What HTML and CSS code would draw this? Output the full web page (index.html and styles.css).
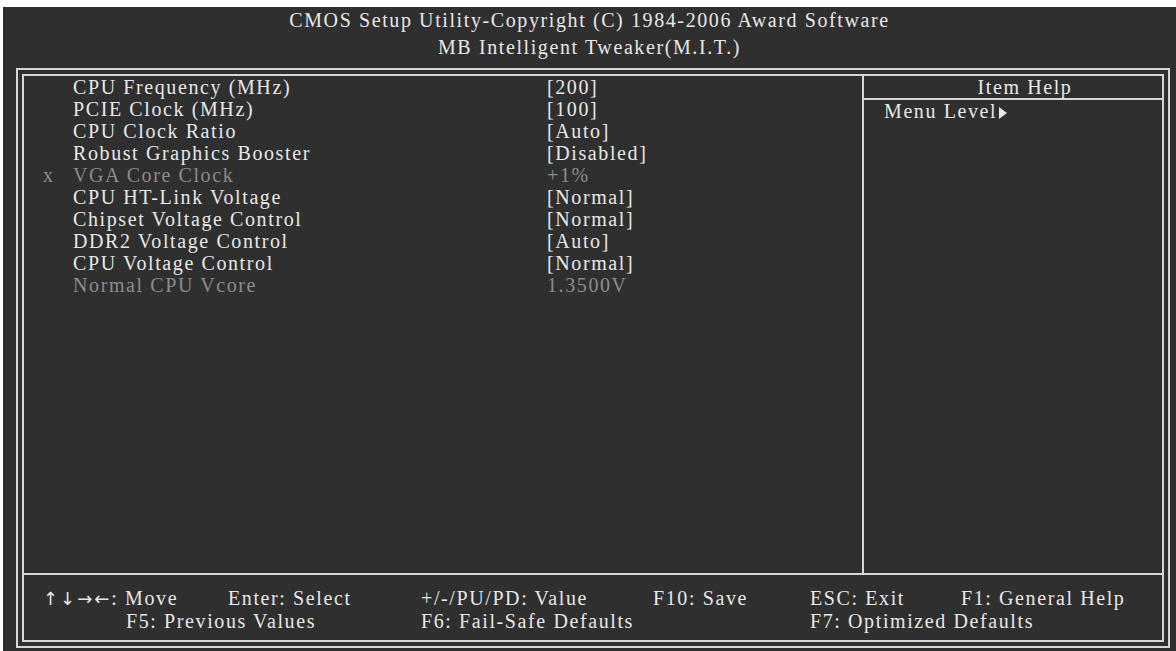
FILE: index.html
```html
<!DOCTYPE html>
<html lang="en">
<head>
  <meta charset="UTF-8">
  <title>CMOS Setup Utility - MB Intelligent Tweaker(M.I.T.)</title>
  <link rel="stylesheet" href="styles.css">
</head>
<body>
  <div class="screen">
    <header class="title">
      <div>CMOS Setup Utility-Copyright (C) 1984-2006 Award Software</div>
      <div>MB Intelligent Tweaker(M.I.T.)</div>
    </header>
    <div class="frame">
      <div class="frame-inner">
        <div class="main">
          <div class="items">
            <div class="row"><span class="mark"></span><span>CPU Frequency (MHz)</span><span>[200]</span></div>
            <div class="row"><span class="mark"></span><span>PCIE Clock (MHz)</span><span>[100]</span></div>
            <div class="row"><span class="mark"></span><span>CPU Clock Ratio</span><span>[Auto]</span></div>
            <div class="row"><span class="mark"></span><span>Robust Graphics Booster</span><span>[Disabled]</span></div>
            <div class="row off"><span class="mark">x</span><span>VGA Core Clock</span><span>+1%</span></div>
            <div class="row"><span class="mark"></span><span>CPU HT-Link Voltage</span><span>[Normal]</span></div>
            <div class="row"><span class="mark"></span><span>Chipset Voltage Control</span><span>[Normal]</span></div>
            <div class="row"><span class="mark"></span><span>DDR2 Voltage Control</span><span>[Auto]</span></div>
            <div class="row"><span class="mark"></span><span>CPU Voltage Control</span><span>[Normal]</span></div>
            <div class="row off"><span class="mark"></span><span>Normal CPU Vcore</span><span>1.3500V</span></div>
          </div>
          <div class="help">
            <div class="help-head">Item Help</div>
            <div class="help-body">Menu Level<svg class="tri" width="8" height="12" viewBox="0 0 8 12"><polygon points="0,0 8,6 0,12" fill="#e8e8e8"/></svg></div>
          </div>
        </div>
        <div class="keys">
          <span class="k-a"><span class="arrows">&#8593;&#8595;&#8594;&#8592;</span>: Move</span>
          <span class="k-c">Enter: Select</span>
          <span class="k-d">+/-/PU/PD: Value</span>
          <span class="k-e">F10: Save</span>
          <span class="k-f">ESC: Exit</span>
          <span class="k-g">F1: General Help</span>
          <span class="k-b2">F5: Previous Values</span>
          <span class="k-d2">F6: Fail-Safe Defaults</span>
          <span class="k-f2">F7: Optimized Defaults</span>
        </div>
      </div>
    </div>
  </div>
</body>
</html>
```

FILE: styles.css
```css
/* BIOS screen */
body {
  margin: 0;
  background: #fff;
  font-family: "Liberation Serif", "Times New Roman", serif;
  font-size: 20px;
  letter-spacing: 1.6px;
  color: #e8e8e8;
}
.screen {
  margin: 7px 0 0 3px;
  height: 644px;
  background: #2f2f2f;
  overflow: hidden;
}
.title {
  height: 61px;
  line-height: 27px;
  text-align: center;
}

/* double frame */
.frame {
  box-sizing: border-box;
  margin-left: 13px;
  width: 1154px;
  height: 580px;
  border: 2px solid #d6d6d6;
  padding: 4px;
}
.frame-inner {
  box-sizing: border-box;
  height: 100%;
  border: 2px solid #d6d6d6;
  display: flex;
  flex-direction: column;
}
.main {
  height: 497px;
  display: flex;
}

/* item list */
.items {
  width: 838px;
  line-height: 22px;
}
.row {
  display: grid;
  grid-template-columns: 49px 474px 1fr;
  white-space: nowrap;
}
.mark { padding-left: 19px; }
.row.off { color: #8c8c8c; }

/* help panel */
.help {
  flex: 1;
  border-left: 2px solid #d6d6d6;
  line-height: 22px;
}
.help-head {
  border-bottom: 2px solid #d6d6d6;
  text-align: center;
  padding-left: 24px;
}
.help-body { padding-left: 20px; }
.tri { margin-left: 2px; vertical-align: -1px; }

/* key legend */
.keys {
  flex: 1;
  border-top: 2px solid #d6d6d6;
  padding: 12px 0 0 19px;
  display: grid;
  grid-template-columns: 83px 102px 193px 232px 157px 151px 1fr;
  grid-auto-rows: 23px;
  line-height: 23px;
  white-space: nowrap;
}
.arrows {
  font-family: "DejaVu Sans", sans-serif;
  font-size: 18px;
  letter-spacing: 2px;
}
.k-a { grid-column: 1 / 3; }
.k-c { grid-column: 3; }
.k-d { grid-column: 4; }
.k-e { grid-column: 5; }
.k-f { grid-column: 6; }
.k-g { grid-column: 7; }
.k-b2 { grid-column: 2 / 4; }
.k-d2 { grid-column: 4 / 6; }
.k-f2 { grid-column: 6 / 8; }
```
